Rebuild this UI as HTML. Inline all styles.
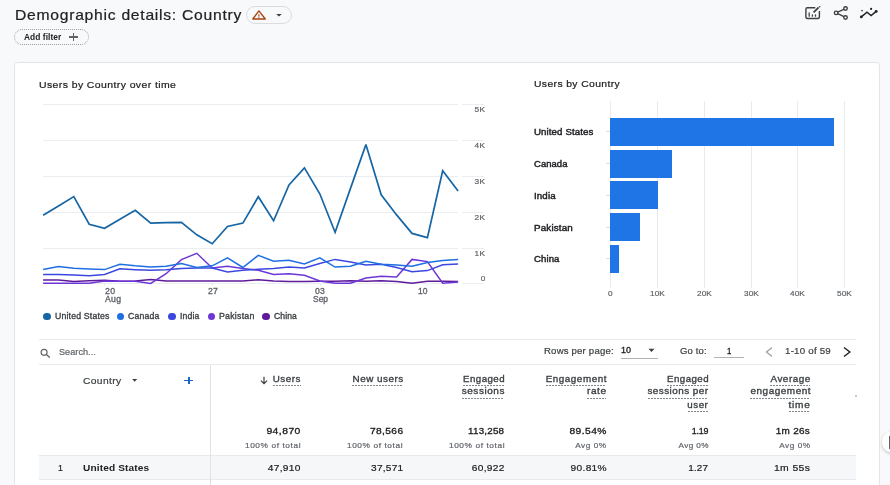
<!DOCTYPE html>
<html><head><meta charset="utf-8"><style>
html,body{margin:0;padding:0;}
body{width:890px;height:485px;overflow:hidden;position:relative;background:#f8f9fa;font-family:"Liberation Sans",sans-serif;}
.t{position:absolute;white-space:nowrap;line-height:1;}
.r{position:absolute;}
#wrap{position:absolute;left:0;top:0;width:890px;height:485px;overflow:hidden;filter:blur(0.35px);}
</style></head><body><div id="wrap">
<div class="t" style="left:15.30px;transform-origin:0 0;top:7.98px;font-size:14.2px;font-weight:400;color:#202124;transform:scaleX(1.1054);letter-spacing:0.661px;-webkit-text-stroke:0.2px #202124;">Demographic details: Country</div>
<div class="r" style="left:246.2px;top:6.4px;width:45.8px;height:17.2px;border:1px solid #dadce0;border-radius:9px;box-sizing:border-box;background:#f8f9fa"></div>
<svg class="r" style="left:250px;top:8px" width="18" height="14" viewBox="0 0 18 14">
<path d="M8.9 2.9 L15.3 11.0 L2.8 11.0 Z" fill="none" stroke="#a94616" stroke-width="1.35" stroke-linejoin="round"/>
<rect x="8.35" y="6.2" width="1.1" height="2.5" fill="#ad4b1b"/><rect x="8.35" y="9.2" width="1.1" height="1.0" fill="#ad4b1b"/></svg>
<svg class="r" style="left:275px;top:12px" width="9" height="6" viewBox="0 0 9 6"><path d="M1.2 2.0 L6.8 2.0 L4.0 4.6 Z" fill="#3c4043"/></svg>
<div class="r" style="left:14.3px;top:28.9px;width:74.4px;height:16.1px;border:1px dotted #9aa0a6;border-radius:9px;box-sizing:border-box"></div>
<div class="t" style="left:24.40px;transform-origin:0 0;top:32.67px;font-size:8.3px;font-weight:700;color:#202124;transform:scaleX(1.0120);letter-spacing:0.048px;">Add filter</div>
<div class="r" style="left:69.00px;top:36.00px;width:8.70px;height:1.60px;background:#5f6368;"></div>
<div class="r" style="left:72.55px;top:32.90px;width:1.60px;height:7.80px;background:#5f6368;"></div>
<svg class="r" style="left:802px;top:3px" width="22" height="19" viewBox="0 0 22 19">
<path d="M13.3 4.7 H5.4 Q3.9 4.7 3.9 6.2 V14 Q3.9 15.5 5.4 15.5 H15.9 Q17.4 15.5 17.4 14 V8" fill="none" stroke="#3c4043" stroke-width="1.4"/>
<path d="M7.2 9.8 V13.2 M10.4 11.8 V13.2 M13.5 11.8 V13.2" stroke="#3c4043" stroke-width="1.3" stroke-linecap="round"/>
<path d="M11.6 9.3 L16.6 4.4" stroke="#3c4043" stroke-width="1.8"/><circle cx="17.7" cy="3.7" r="0.8" fill="#3c4043"/></svg>
<svg class="r" style="left:830px;top:3px" width="22" height="19" viewBox="0 0 22 19">
<circle cx="15.5" cy="5.5" r="1.75" fill="none" stroke="#3c4043" stroke-width="1.4"/>
<circle cx="6.1" cy="9.9" r="1.75" fill="none" stroke="#3c4043" stroke-width="1.4"/>
<circle cx="15.5" cy="14.5" r="1.75" fill="none" stroke="#3c4043" stroke-width="1.4"/>
<path d="M7.7 9.1 L13.9 6.3 M7.7 10.7 L13.9 13.7" stroke="#3c4043" stroke-width="1.3"/></svg>
<svg class="r" style="left:857px;top:3px" width="22" height="19" viewBox="0 0 22 19">
<path d="M4.3 13.9 L10 9.2 L14.1 12.5 L19.2 8.4" fill="none" stroke="#202124" stroke-width="1.4"/>
<circle cx="4.3" cy="13.9" r="1.4" fill="#202124"/><circle cx="19.2" cy="8.4" r="1.4" fill="#202124"/>
<circle cx="5.1" cy="7.6" r="0.85" fill="#3c4043"/><circle cx="14.1" cy="5.9" r="1.1" fill="#202124"/></svg>
<div class="r" style="left:14.4px;top:62.2px;width:866px;height:440px;border:1px solid #e3e5e8;border-radius:4px;box-sizing:border-box;background:#fff"></div>
<div class="t" style="left:38.80px;transform-origin:0 0;top:79.87px;font-size:9.6px;font-weight:400;color:#202124;transform:scaleX(1.0890);letter-spacing:0.380px;-webkit-text-stroke:0.2px #202124;">Users by Country over time</div>
<div class="r" style="left:43.00px;top:103.80px;width:415.00px;height:1.00px;background:#ebedf0;"></div>
<div class="r" style="left:461.80px;top:103.80px;width:22.20px;height:1.00px;background:#ebedf0;"></div>
<div class="r" style="left:43.00px;top:139.80px;width:415.00px;height:1.00px;background:#ebedf0;"></div>
<div class="r" style="left:461.80px;top:139.80px;width:22.20px;height:1.00px;background:#ebedf0;"></div>
<div class="r" style="left:43.00px;top:175.70px;width:415.00px;height:1.00px;background:#ebedf0;"></div>
<div class="r" style="left:461.80px;top:175.70px;width:22.20px;height:1.00px;background:#ebedf0;"></div>
<div class="r" style="left:43.00px;top:211.60px;width:415.00px;height:1.00px;background:#ebedf0;"></div>
<div class="r" style="left:461.80px;top:211.60px;width:22.20px;height:1.00px;background:#ebedf0;"></div>
<div class="r" style="left:43.00px;top:247.50px;width:415.00px;height:1.00px;background:#ebedf0;"></div>
<div class="r" style="left:461.80px;top:247.50px;width:22.20px;height:1.00px;background:#ebedf0;"></div>
<div class="r" style="left:461.80px;top:282.90px;width:22.20px;height:1.00px;background:#ebedf0;"></div>
<div class="r" style="left:43.00px;top:283.00px;width:415.00px;height:1.00px;background:#ebedf0;"></div>
<div class="t" style="right:404.33px;transform-origin:100% 0;top:106.21px;font-size:7.9px;font-weight:400;color:#5f6368;transform:scaleX(1.0485);letter-spacing:0.447px;-webkit-text-stroke:0.2px #5f6368;">5K</div>
<div class="t" style="right:404.33px;transform-origin:100% 0;top:142.21px;font-size:7.9px;font-weight:400;color:#5f6368;transform:scaleX(1.0485);letter-spacing:0.447px;-webkit-text-stroke:0.2px #5f6368;">4K</div>
<div class="t" style="right:404.33px;transform-origin:100% 0;top:178.11px;font-size:7.9px;font-weight:400;color:#5f6368;transform:scaleX(1.0485);letter-spacing:0.447px;-webkit-text-stroke:0.2px #5f6368;">3K</div>
<div class="t" style="right:404.33px;transform-origin:100% 0;top:214.01px;font-size:7.9px;font-weight:400;color:#5f6368;transform:scaleX(1.0485);letter-spacing:0.447px;-webkit-text-stroke:0.2px #5f6368;">2K</div>
<div class="t" style="right:404.33px;transform-origin:100% 0;top:249.91px;font-size:7.9px;font-weight:400;color:#5f6368;transform:scaleX(1.0485);letter-spacing:0.447px;-webkit-text-stroke:0.2px #5f6368;">1K</div>
<div class="t" style="right:404.60px;transform-origin:100% 0;top:274.81px;font-size:7.9px;font-weight:400;color:#5f6368;transform:scaleX(1.0462);letter-spacing:0.194px;-webkit-text-stroke:0.2px #5f6368;">0</div>
<div class="r" style="left:104.00px;top:283.80px;width:1.00px;height:2.40px;background:#e8eaed;"></div>
<div class="r" style="left:211.80px;top:283.80px;width:1.00px;height:2.40px;background:#e8eaed;"></div>
<div class="r" style="left:319.60px;top:283.80px;width:1.00px;height:2.40px;background:#e8eaed;"></div>
<div class="r" style="left:427.10px;top:283.80px;width:1.00px;height:2.40px;background:#e8eaed;"></div>
<div class="t" style="left:104.90px;transform-origin:0 0;top:287.09px;font-size:8.4px;font-weight:400;color:#5f6368;transform:scaleX(1.0458);letter-spacing:0.409px;-webkit-text-stroke:0.32px #5f6368;">20</div>
<div class="t" style="left:104.90px;transform-origin:0 0;top:295.19px;font-size:8.4px;font-weight:400;color:#5f6368;transform:scaleX(1.0386);letter-spacing:0.278px;-webkit-text-stroke:0.32px #5f6368;">Aug</div>
<div class="t" style="left:207.70px;transform-origin:0 0;top:287.09px;font-size:8.4px;font-weight:400;color:#5f6368;transform:scaleX(1.0298);letter-spacing:0.270px;-webkit-text-stroke:0.32px #5f6368;">27</div>
<div class="t" style="left:315.10px;transform-origin:0 0;top:287.09px;font-size:8.4px;font-weight:400;color:#5f6368;transform:scaleX(1.0298);letter-spacing:0.270px;-webkit-text-stroke:0.32px #5f6368;">03</div>
<div class="t" style="left:312.70px;transform-origin:0 0;top:295.19px;font-size:8.4px;font-weight:400;color:#5f6368;transform:scaleX(1.0051);letter-spacing:0.038px;-webkit-text-stroke:0.32px #5f6368;">Sep</div>
<div class="t" style="left:418.30px;transform-origin:0 0;top:287.09px;font-size:8.4px;font-weight:400;color:#5f6368;transform:scaleX(1.0137);letter-spacing:0.126px;-webkit-text-stroke:0.32px #5f6368;">10</div>
<svg class="r" style="left:0;top:0" width="890" height="485"><polyline points="43.1,280.1 58.5,280.1 73.8,281.4 89.2,280.7 104.6,280.3 119.9,281.2 135.3,281.0 150.7,279.6 166.1,281.0 181.4,281.0 196.8,281.0 212.2,281.0 227.5,281.0 242.9,281.0 258.3,279.8 273.6,281.0 289.0,281.5 304.4,281.5 319.8,281.2 335.1,281.2 350.5,280.7 365.9,281.2 381.2,280.7 396.6,281.5 412.0,283.2 427.4,281.2 442.7,281.2 458.1,281.5" fill="none" stroke="#5f1b9a" stroke-width="1.5" stroke-linejoin="miter" stroke-miterlimit="3"/><polyline points="43.1,283.2 58.5,283.2 73.8,283.2 89.2,283.2 104.6,281.0 119.9,281.2 135.3,281.2 150.7,283.4 166.1,273.7 181.4,259.6 196.8,253.3 212.2,268.0 227.5,266.3 242.9,268.6 258.3,270.3 273.6,274.4 289.0,273.7 304.4,275.3 319.8,281.0 335.1,283.2 350.5,283.2 365.9,278.1 381.2,276.2 396.6,277.0 412.0,259.4 427.4,261.6 442.7,283.2 458.1,282.1" fill="none" stroke="#6d36d6" stroke-width="1.5" stroke-linejoin="miter" stroke-miterlimit="3"/><polyline points="43.1,274.5 58.5,274.5 73.8,274.9 89.2,275.8 104.6,274.5 119.9,268.8 135.3,269.7 150.7,270.3 166.1,269.7 181.4,268.6 196.8,268.0 212.2,268.0 227.5,272.0 242.9,270.3 258.3,269.2 273.6,268.6 289.0,266.9 304.4,268.0 319.8,263.5 335.1,259.4 350.5,261.9 365.9,265.0 381.2,264.3 396.6,267.5 412.0,271.7 427.4,270.6 442.7,264.7 458.1,263.9" fill="none" stroke="#3b48e0" stroke-width="1.5" stroke-linejoin="miter" stroke-miterlimit="3"/><polyline points="43.1,269.6 58.5,266.5 73.8,268.2 89.2,269.0 104.6,269.6 119.9,264.3 135.3,265.8 150.7,266.9 166.1,266.3 181.4,263.5 196.8,267.5 212.2,265.8 227.5,257.9 242.9,267.5 258.3,255.3 273.6,261.3 289.0,260.2 304.4,263.9 319.8,257.9 335.1,267.1 350.5,266.3 365.9,261.3 381.2,264.2 396.6,265.0 412.0,266.3 427.4,262.4 442.7,260.5 458.1,259.4" fill="none" stroke="#1e6fe3" stroke-width="1.5" stroke-linejoin="miter" stroke-miterlimit="3"/><polyline points="43.1,215.3 58.5,206.0 73.8,196.6 89.2,224.2 104.6,228.3 119.9,219.3 135.3,210.3 150.7,223.2 166.1,222.7 181.4,222.4 196.8,234.8 212.2,243.7 227.5,226.4 242.9,223.1 258.3,196.7 273.6,220.8 289.0,184.9 304.4,167.9 319.8,193.8 335.1,232.4 350.5,188.4 365.9,144.6 381.2,194.8 396.6,214.9 412.0,233.4 427.4,237.6 442.7,170.8 458.1,190.9" fill="none" stroke="#1666a6" stroke-width="1.7" stroke-linejoin="miter" stroke-miterlimit="3"/></svg>
<div class="r" style="left:43.00px;top:312.80px;width:7.6px;height:7.6px;border-radius:50%;background:#1666a6"></div>
<div class="t" style="left:54.70px;transform-origin:0 0;top:312.29px;font-size:8.4px;font-weight:400;color:#3c4043;transform:scaleX(1.0413);letter-spacing:0.167px;-webkit-text-stroke:0.32px #3c4043;">United States</div>
<div class="r" style="left:116.80px;top:312.80px;width:7.6px;height:7.6px;border-radius:50%;background:#1e6fe3"></div>
<div class="t" style="left:128.40px;transform-origin:0 0;top:312.29px;font-size:8.4px;font-weight:400;color:#3c4043;transform:scaleX(1.0335);letter-spacing:0.191px;-webkit-text-stroke:0.32px #3c4043;">Canada</div>
<div class="r" style="left:168.00px;top:312.80px;width:7.6px;height:7.6px;border-radius:50%;background:#3b48e0"></div>
<div class="t" style="left:179.70px;transform-origin:0 0;top:312.29px;font-size:8.4px;font-weight:400;color:#3c4043;transform:scaleX(1.0298);letter-spacing:0.132px;-webkit-text-stroke:0.32px #3c4043;">India</div>
<div class="r" style="left:207.70px;top:312.80px;width:7.6px;height:7.6px;border-radius:50%;background:#6d36d6"></div>
<div class="t" style="left:219.00px;transform-origin:0 0;top:312.29px;font-size:8.4px;font-weight:400;color:#3c4043;transform:scaleX(1.0494);letter-spacing:0.217px;-webkit-text-stroke:0.32px #3c4043;">Pakistan</div>
<div class="r" style="left:262.30px;top:312.80px;width:7.6px;height:7.6px;border-radius:50%;background:#5f1b9a"></div>
<div class="t" style="left:274.00px;transform-origin:0 0;top:312.29px;font-size:8.4px;font-weight:400;color:#3c4043;transform:scaleX(1.0217);letter-spacing:0.116px;-webkit-text-stroke:0.32px #3c4043;">China</div>
<div class="t" style="left:533.70px;transform-origin:0 0;top:79.47px;font-size:9.6px;font-weight:400;color:#202124;transform:scaleX(1.0785);letter-spacing:0.360px;-webkit-text-stroke:0.2px #202124;">Users by Country</div>
<div class="r" style="left:610.30px;top:101.40px;width:1.00px;height:186.90px;background:#e8eaed;"></div>
<div class="r" style="left:657.00px;top:101.40px;width:1.00px;height:186.90px;background:#e8eaed;"></div>
<div class="r" style="left:703.80px;top:101.40px;width:1.00px;height:186.90px;background:#e8eaed;"></div>
<div class="r" style="left:750.50px;top:101.40px;width:1.00px;height:186.90px;background:#e8eaed;"></div>
<div class="r" style="left:797.20px;top:101.40px;width:1.00px;height:186.90px;background:#e8eaed;"></div>
<div class="r" style="left:843.90px;top:101.40px;width:1.00px;height:186.90px;background:#e8eaed;"></div>
<div class="r" style="left:610.40px;top:117.80px;width:223.40px;height:27.80px;background:#1f74e6;"></div>
<div class="r" style="left:605.80px;top:131.20px;width:4.20px;height:1.00px;background:#dadce0;"></div>
<div class="t" style="left:533.70px;transform-origin:0 0;top:128.31px;font-size:9.2px;font-weight:400;color:#202124;transform:scaleX(1.0528);letter-spacing:0.099px;-webkit-text-stroke:0.42px #202124;">United States</div>
<div class="r" style="left:610.40px;top:149.60px;width:62.00px;height:28.00px;background:#1f74e6;"></div>
<div class="r" style="left:605.80px;top:163.10px;width:4.20px;height:1.00px;background:#dadce0;"></div>
<div class="t" style="left:533.70px;transform-origin:0 0;top:160.21px;font-size:9.2px;font-weight:400;color:#202124;transform:scaleX(1.0276);letter-spacing:0.074px;-webkit-text-stroke:0.42px #202124;">Canada</div>
<div class="r" style="left:610.40px;top:181.40px;width:47.80px;height:27.80px;background:#1f74e6;"></div>
<div class="r" style="left:605.80px;top:194.80px;width:4.20px;height:1.00px;background:#dadce0;"></div>
<div class="t" style="left:533.70px;transform-origin:0 0;top:191.91px;font-size:9.2px;font-weight:400;color:#202124;transform:scaleX(1.0579);letter-spacing:0.117px;-webkit-text-stroke:0.42px #202124;">India</div>
<div class="r" style="left:610.40px;top:212.90px;width:29.30px;height:28.40px;background:#1f74e6;"></div>
<div class="r" style="left:605.80px;top:226.60px;width:4.20px;height:1.00px;background:#dadce0;"></div>
<div class="t" style="left:533.70px;transform-origin:0 0;top:223.71px;font-size:9.2px;font-weight:400;color:#202124;transform:scaleX(1.0697);letter-spacing:0.141px;-webkit-text-stroke:0.42px #202124;">Pakistan</div>
<div class="r" style="left:610.40px;top:244.70px;width:8.60px;height:28.10px;background:#1f74e6;"></div>
<div class="r" style="left:605.80px;top:258.25px;width:4.20px;height:1.00px;background:#dadce0;"></div>
<div class="t" style="left:533.70px;transform-origin:0 0;top:255.36px;font-size:9.2px;font-weight:400;color:#202124;transform:scaleX(1.0396);letter-spacing:0.098px;-webkit-text-stroke:0.42px #202124;">China</div>
<div class="t" style="left:608.49px;transform-origin:0 0;top:290.34px;font-size:8.1px;font-weight:400;color:#5f6368;transform:scaleX(1.0134);letter-spacing:0.060px;-webkit-text-stroke:0.2px #5f6368;">0</div>
<div class="t" style="left:650.10px;transform-origin:0 0;top:290.34px;font-size:8.1px;font-weight:400;color:#5f6368;transform:scaleX(1.0134);letter-spacing:0.095px;-webkit-text-stroke:0.2px #5f6368;">10K</div>
<div class="t" style="left:696.90px;transform-origin:0 0;top:290.34px;font-size:8.1px;font-weight:400;color:#5f6368;transform:scaleX(1.0134);letter-spacing:0.095px;-webkit-text-stroke:0.2px #5f6368;">20K</div>
<div class="t" style="left:743.60px;transform-origin:0 0;top:290.34px;font-size:8.1px;font-weight:400;color:#5f6368;transform:scaleX(1.0134);letter-spacing:0.095px;-webkit-text-stroke:0.2px #5f6368;">30K</div>
<div class="t" style="left:790.30px;transform-origin:0 0;top:290.34px;font-size:8.1px;font-weight:400;color:#5f6368;transform:scaleX(1.0134);letter-spacing:0.095px;-webkit-text-stroke:0.2px #5f6368;">40K</div>
<div class="t" style="left:837.00px;transform-origin:0 0;top:290.34px;font-size:8.1px;font-weight:400;color:#5f6368;transform:scaleX(1.0134);letter-spacing:0.095px;-webkit-text-stroke:0.2px #5f6368;">50K</div>
<div class="r" style="left:38.90px;top:338.50px;width:817.10px;height:1.00px;background:#e8eaed;"></div>
<div class="r" style="left:38.90px;top:363.80px;width:817.10px;height:1.00px;background:#e8eaed;"></div>
<svg class="r" style="left:38px;top:346px" width="14" height="14" viewBox="0 0 14 14">
<circle cx="6.1" cy="6.3" r="3.0" fill="none" stroke="#5f6368" stroke-width="1.15"/><path d="M8.3 8.5 L11.8 11.4" stroke="#5f6368" stroke-width="1.3"/></svg>
<div class="t" style="left:59.20px;transform-origin:0 0;top:347.58px;font-size:9.0px;font-weight:400;color:#5f6368;transform:scaleX(1.0109);letter-spacing:0.048px;-webkit-text-stroke:0.2px #5f6368;">Search...</div>
<div class="t" style="left:543.60px;transform-origin:0 0;top:347.41px;font-size:9.2px;font-weight:400;color:#3c4043;transform:scaleX(1.0408);letter-spacing:0.194px;-webkit-text-stroke:0.2px #3c4043;">Rows per page:</div>
<div class="t" style="left:620.50px;transform-origin:0 0;top:346.18px;font-size:9.0px;font-weight:400;color:#202124;transform:scaleX(0.9945);letter-spacing:-0.056px;-webkit-text-stroke:0.32px #202124;">10</div>
<div class="r" style="left:620.60px;top:357.90px;width:37.60px;height:0.90px;background:#b0b4b9;"></div>
<svg class="r" style="left:647px;top:348px" width="9" height="5" viewBox="0 0 9 5"><path d="M1.5 0.8 L7.5 0.8 L4.5 4 Z" fill="#3c4043"/></svg>
<div class="t" style="left:680.30px;transform-origin:0 0;top:347.41px;font-size:9.2px;font-weight:400;color:#3c4043;transform:scaleX(1.0328);letter-spacing:0.159px;-webkit-text-stroke:0.2px #3c4043;">Go to:</div>
<div class="r" style="left:713.90px;top:356.80px;width:29.80px;height:0.90px;background:#b0b4b9;"></div>
<div class="t" style="left:727.00px;transform-origin:0 0;top:346.69px;font-size:8.4px;font-weight:400;color:#202124;transform:scaleX(0.9281);letter-spacing:-0.362px;-webkit-text-stroke:0.32px #202124;">1</div>
<svg class="r" style="left:763px;top:346px" width="12" height="12" viewBox="0 0 12 12"><path d="M9 1.5 L3.5 6 L9 10.5" fill="none" stroke="#9aa0a6" stroke-width="1.3"/></svg>
<div class="t" style="left:785.00px;transform-origin:0 0;top:347.13px;font-size:9.3px;font-weight:400;color:#3c4043;transform:scaleX(1.0468);letter-spacing:0.208px;-webkit-text-stroke:0.2px #3c4043;">1-10 of 59</div>
<svg class="r" style="left:841px;top:346px" width="12" height="12" viewBox="0 0 12 12"><path d="M3 1.5 L8.8 6 L3 10.5" fill="none" stroke="#202124" stroke-width="1.45"/></svg>
<div class="r" style="left:210.20px;top:364.80px;width:1.00px;height:120.20px;background:#e0e2e6;"></div>
<div class="t" style="left:83.20px;transform-origin:0 0;top:375.87px;font-size:9.6px;font-weight:400;color:#3c4043;transform:scaleX(1.0682);letter-spacing:0.358px;-webkit-text-stroke:0.2px #3c4043;">Country</div>
<svg class="r" style="left:131px;top:378px" width="8" height="5" viewBox="0 0 8 5"><path d="M1.2 1 L6.2 1 L3.7 3.8 Z" fill="#3c4043"/></svg>
<div class="r" style="left:184.10px;top:379.80px;width:8.90px;height:1.50px;background:#1b64c8;"></div>
<div class="r" style="left:188.00px;top:376.80px;width:1.50px;height:7.30px;background:#1b64c8;"></div>
<div class="t" style="right:588.88px;transform-origin:100% 0;top:374.58px;font-size:9.0px;font-weight:400;color:#3c4043;transform:scaleX(1.0893);letter-spacing:0.482px;-webkit-text-stroke:0.32px #3c4043;">Users</div>
<div class="r" style="left:273.00px;top:384.90px;width:28.00px;height:1px;background:repeating-linear-gradient(to right,#80868b 0 2px,transparent 2px 3px)"></div>
<svg class="r" style="left:258.7px;top:375.5px" width="10" height="9" viewBox="0 0 10 9"><path d="M5 0.8 V7.6 M1.9 4.6 L5 7.6 L8.1 4.6" fill="none" stroke="#3c4043" stroke-width="1.2"/></svg>
<div class="t" style="right:486.69px;transform-origin:100% 0;top:374.58px;font-size:9.0px;font-weight:400;color:#3c4043;transform:scaleX(1.0963);letter-spacing:0.467px;-webkit-text-stroke:0.32px #3c4043;">New users</div>
<div class="r" style="left:352.00px;top:384.90px;width:51.00px;height:1px;background:repeating-linear-gradient(to right,#80868b 0 2px,transparent 2px 3px)"></div>
<div class="t" style="right:385.34px;transform-origin:100% 0;top:374.58px;font-size:9.0px;font-weight:400;color:#3c4043;transform:scaleX(1.0772);letter-spacing:0.430px;-webkit-text-stroke:0.32px #3c4043;">Engaged</div>
<div class="r" style="left:463.00px;top:384.90px;width:41.00px;height:1px;background:repeating-linear-gradient(to right,#80868b 0 2px,transparent 2px 3px)"></div>
<div class="t" style="right:385.25px;transform-origin:100% 0;top:387.38px;font-size:9.0px;font-weight:400;color:#3c4043;transform:scaleX(1.1097);letter-spacing:0.495px;-webkit-text-stroke:0.32px #3c4043;">sessions</div>
<div class="r" style="left:462.00px;top:397.70px;width:42.00px;height:1px;background:repeating-linear-gradient(to right,#80868b 0 2px,transparent 2px 3px)"></div>
<div class="t" style="right:283.06px;transform-origin:100% 0;top:374.58px;font-size:9.0px;font-weight:400;color:#3c4043;transform:scaleX(1.0946);letter-spacing:0.490px;-webkit-text-stroke:0.32px #3c4043;">Engagement</div>
<div class="r" style="left:546.00px;top:384.90px;width:60.00px;height:1px;background:repeating-linear-gradient(to right,#80868b 0 2px,transparent 2px 3px)"></div>
<div class="t" style="right:283.00px;transform-origin:100% 0;top:387.38px;font-size:9.0px;font-weight:400;color:#3c4043;transform:scaleX(1.1158);letter-spacing:0.536px;-webkit-text-stroke:0.32px #3c4043;">rate</div>
<div class="r" style="left:587.00px;top:397.70px;width:19.00px;height:1px;background:repeating-linear-gradient(to right,#80868b 0 2px,transparent 2px 3px)"></div>
<div class="t" style="right:181.34px;transform-origin:100% 0;top:374.58px;font-size:9.0px;font-weight:400;color:#3c4043;transform:scaleX(1.0772);letter-spacing:0.430px;-webkit-text-stroke:0.32px #3c4043;">Engaged</div>
<div class="r" style="left:667.00px;top:384.90px;width:41.00px;height:1px;background:repeating-linear-gradient(to right,#80868b 0 2px,transparent 2px 3px)"></div>
<div class="t" style="right:181.34px;transform-origin:100% 0;top:387.38px;font-size:9.0px;font-weight:400;color:#3c4043;transform:scaleX(1.1007);letter-spacing:0.420px;-webkit-text-stroke:0.32px #3c4043;">sessions per</div>
<div class="r" style="left:648.00px;top:397.70px;width:60.00px;height:1px;background:repeating-linear-gradient(to right,#80868b 0 2px,transparent 2px 3px)"></div>
<div class="t" style="right:181.30px;transform-origin:100% 0;top:400.68px;font-size:9.0px;font-weight:400;color:#3c4043;transform:scaleX(1.0854);letter-spacing:0.459px;-webkit-text-stroke:0.32px #3c4043;">user</div>
<div class="r" style="left:688.00px;top:411.00px;width:20.00px;height:1px;background:repeating-linear-gradient(to right,#80868b 0 2px,transparent 2px 3px)"></div>
<div class="t" style="right:79.26px;transform-origin:100% 0;top:374.58px;font-size:9.0px;font-weight:400;color:#3c4043;transform:scaleX(1.0965);letter-spacing:0.489px;-webkit-text-stroke:0.32px #3c4043;">Average</div>
<div class="r" style="left:770.00px;top:384.90px;width:40.00px;height:1px;background:repeating-linear-gradient(to right,#80868b 0 2px,transparent 2px 3px)"></div>
<div class="t" style="right:79.24px;transform-origin:100% 0;top:387.38px;font-size:9.0px;font-weight:400;color:#3c4043;transform:scaleX(1.1015);letter-spacing:0.512px;-webkit-text-stroke:0.32px #3c4043;">engagement</div>
<div class="r" style="left:750.00px;top:397.70px;width:60.00px;height:1px;background:repeating-linear-gradient(to right,#80868b 0 2px,transparent 2px 3px)"></div>
<div class="t" style="right:79.10px;transform-origin:100% 0;top:400.68px;font-size:9.0px;font-weight:400;color:#3c4043;transform:scaleX(1.1234);letter-spacing:0.623px;-webkit-text-stroke:0.32px #3c4043;">time</div>
<div class="r" style="left:789.00px;top:411.00px;width:21.00px;height:1px;background:repeating-linear-gradient(to right,#80868b 0 2px,transparent 2px 3px)"></div>
<div class="r" style="left:38.90px;top:455.30px;width:817.10px;height:1.00px;background:#e8eaed;"></div>
<div class="r" style="left:38.90px;top:456.30px;width:817.10px;height:22.70px;background:#f6f7f9;"></div>
<div class="r" style="left:38.90px;top:479.00px;width:817.10px;height:1.00px;background:#e8eaed;"></div>
<div class="r" style="left:210.20px;top:455.30px;width:1.00px;height:29.70px;background:#e0e2e6;"></div>
<div class="t" style="right:588.96px;transform-origin:100% 0;top:427.13px;font-size:9.3px;font-weight:400;color:#202124;transform:scaleX(1.1172);letter-spacing:0.398px;-webkit-text-stroke:0.32px #202124;">94,870</div>
<div class="t" style="right:588.81px;transform-origin:100% 0;top:441.83px;font-size:8.0px;font-weight:400;color:#5f6368;transform:scaleX(1.0381);letter-spacing:0.572px;-webkit-text-stroke:0.2px #5f6368;">100% of total</div>
<div class="t" style="right:589.12px;transform-origin:100% 0;top:462.96px;font-size:9.5px;font-weight:400;color:#202124;transform:scaleX(1.0711);letter-spacing:0.257px;-webkit-text-stroke:0.2px #202124;">47,910</div>
<div class="t" style="right:486.83px;transform-origin:100% 0;top:427.13px;font-size:9.3px;font-weight:400;color:#202124;transform:scaleX(1.0982);letter-spacing:0.339px;-webkit-text-stroke:0.32px #202124;">78,566</div>
<div class="t" style="right:486.61px;transform-origin:100% 0;top:441.83px;font-size:8.0px;font-weight:400;color:#5f6368;transform:scaleX(1.0381);letter-spacing:0.572px;-webkit-text-stroke:0.2px #5f6368;">100% of total</div>
<div class="t" style="right:486.96px;transform-origin:100% 0;top:462.96px;font-size:9.5px;font-weight:400;color:#202124;transform:scaleX(1.0628);letter-spacing:0.229px;-webkit-text-stroke:0.2px #202124;">37,571</div>
<div class="t" style="right:385.60px;transform-origin:100% 0;top:427.13px;font-size:9.3px;font-weight:400;color:#202124;transform:scaleX(1.0560);letter-spacing:0.194px;-webkit-text-stroke:0.32px #202124;">113,258</div>
<div class="t" style="right:385.21px;transform-origin:100% 0;top:441.83px;font-size:8.0px;font-weight:400;color:#5f6368;transform:scaleX(1.0381);letter-spacing:0.572px;-webkit-text-stroke:0.2px #5f6368;">100% of total</div>
<div class="t" style="right:385.52px;transform-origin:100% 0;top:462.96px;font-size:9.5px;font-weight:400;color:#202124;transform:scaleX(1.0732);letter-spacing:0.264px;-webkit-text-stroke:0.2px #202124;">60,922</div>
<div class="t" style="right:283.16px;transform-origin:100% 0;top:427.13px;font-size:9.3px;font-weight:400;color:#202124;transform:scaleX(1.1057);letter-spacing:0.402px;-webkit-text-stroke:0.32px #202124;">89.54%</div>
<div class="t" style="right:283.06px;transform-origin:100% 0;top:441.83px;font-size:8.0px;font-weight:400;color:#5f6368;transform:scaleX(1.0246);letter-spacing:0.527px;-webkit-text-stroke:0.2px #5f6368;">Avg 0%</div>
<div class="t" style="right:283.30px;transform-origin:100% 0;top:462.96px;font-size:9.5px;font-weight:400;color:#202124;transform:scaleX(1.0704);letter-spacing:0.282px;-webkit-text-stroke:0.2px #202124;">90.81%</div>
<div class="t" style="right:181.99px;transform-origin:100% 0;top:427.13px;font-size:9.3px;font-weight:400;color:#202124;transform:scaleX(0.9536);letter-spacing:-0.196px;-webkit-text-stroke:0.32px #202124;">1.19</div>
<div class="t" style="right:181.39px;transform-origin:100% 0;top:441.83px;font-size:8.0px;font-weight:400;color:#5f6368;transform:scaleX(1.0188);letter-spacing:0.404px;-webkit-text-stroke:0.2px #5f6368;">Avg 0%</div>
<div class="t" style="right:181.64px;transform-origin:100% 0;top:462.96px;font-size:9.5px;font-weight:400;color:#202124;transform:scaleX(1.0393);letter-spacing:0.155px;-webkit-text-stroke:0.2px #202124;">1.27</div>
<div class="t" style="right:79.52px;transform-origin:100% 0;top:427.13px;font-size:9.3px;font-weight:400;color:#202124;transform:scaleX(1.0689);letter-spacing:0.262px;-webkit-text-stroke:0.32px #202124;">1m 26s</div>
<div class="t" style="right:79.26px;transform-origin:100% 0;top:441.83px;font-size:8.0px;font-weight:400;color:#5f6368;transform:scaleX(1.0246);letter-spacing:0.527px;-webkit-text-stroke:0.2px #5f6368;">Avg 0%</div>
<div class="t" style="right:79.42px;transform-origin:100% 0;top:462.96px;font-size:9.5px;font-weight:400;color:#202124;transform:scaleX(1.0914);letter-spacing:0.348px;-webkit-text-stroke:0.2px #202124;">1m 55s</div>
<div class="t" style="left:58.10px;transform-origin:0 0;top:462.96px;font-size:9.5px;font-weight:400;color:#202124;transform:scaleX(0.9258);letter-spacing:-0.423px;-webkit-text-stroke:0.2px #202124;">1</div>
<div class="t" style="left:82.80px;transform-origin:0 0;top:462.62px;font-size:9.9px;font-weight:700;color:#202124;transform:scaleX(1.0240);letter-spacing:0.124px;">United States</div>
<div class="r" style="left:855.00px;top:395.20px;width:1.50px;height:1.50px;background:#c4c7ca;"></div>
<div class="r" style="left:881.6px;top:430.7px;width:22px;height:22px;border-radius:50%;background:#fff;box-shadow:0 1px 3px rgba(60,64,67,.3)"></div>
<div class="r" style="left:888.80px;top:436.00px;width:1.20px;height:12.50px;background:#5f6368;"></div>
</div></body></html>
